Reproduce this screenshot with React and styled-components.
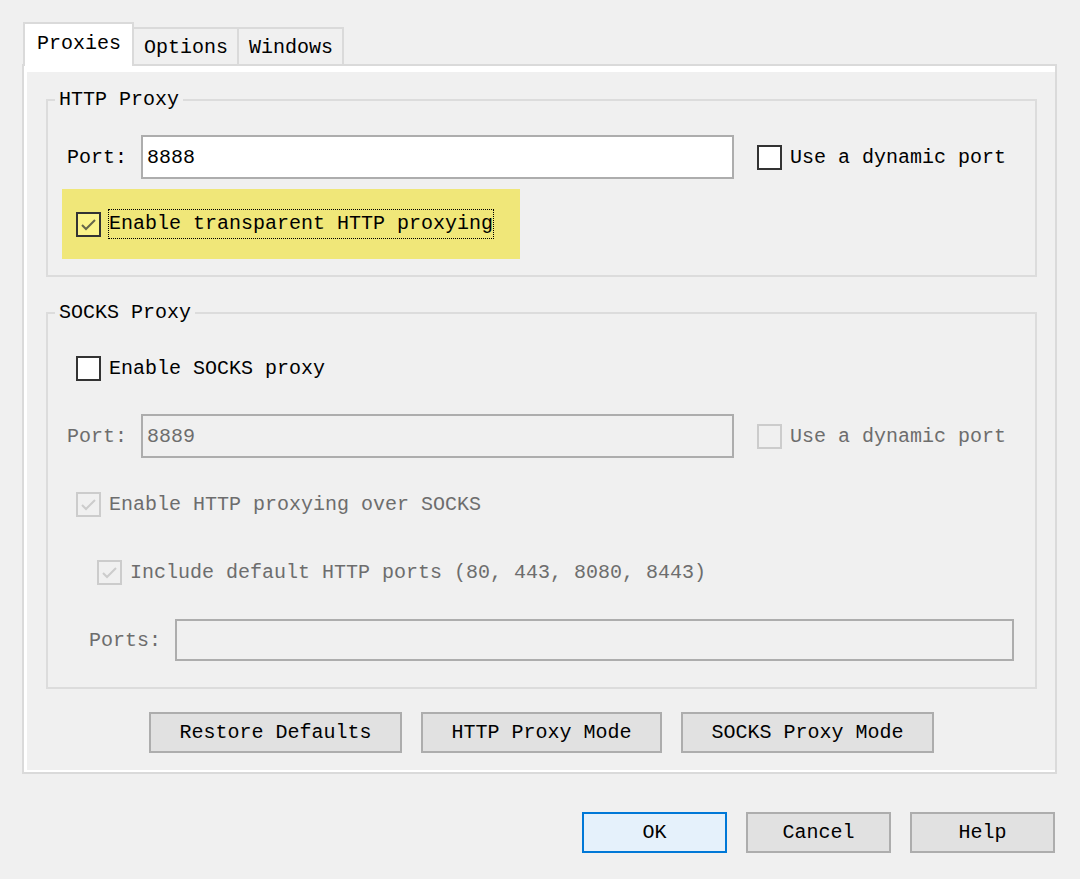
import React from "react";
import styled, { createGlobalStyle, css } from "styled-components";

const GlobalStyle = createGlobalStyle`
  html, body {
    margin: 0;
    background: #f0f0f0;
  }
  body {
    font-family: "Liberation Mono", "DejaVu Sans Mono", monospace;
    font-size: 20px;
    color: #000;
  }
`;

const Window = styled.div`
  width: 1080px;
  height: 879px;
  box-sizing: border-box;
  padding: 22px 23px 0 22px;
  display: flex;
  flex-direction: column;
`;

const TabStrip = styled.div`
  display: flex;
  align-items: flex-end;
  height: 42px;
  padding-left: 1px;
`;

const Tab = styled.div`
  box-sizing: border-box;
  border: 2px solid #dadada;
  border-bottom: none;
  line-height: 22px;
  ${(p) =>
    p.$active
      ? css`
          position: relative;
          z-index: 1;
          height: 44px;
          margin-bottom: -2px;
          padding: 9px 11px 0 12px;
          background: #fff;
        `
      : css`
          height: 37px;
          margin-left: -2px;
          padding: 8px 9px 0 10px;
          background: #f0f0f0;
        `}
`;

const Panel = styled.div`
  box-sizing: border-box;
  border: 2px solid #dadada;
  box-shadow: inset 3px 6px 0 #fff, inset 0 -2px 0 #fff;
  padding: 23px 18px 19px 22px;
  display: flex;
  flex-direction: column;
`;

const Group = styled.fieldset`
  margin: ${(p) => (p.$spaced ? "25px 0 0" : "0")};
  padding: 0;
  min-inline-size: 0;
  border: 2px solid #dcdcdc;
`;

const Legend = styled.legend`
  margin-left: 7px;
  padding: 0 4px;
  line-height: 22px;
`;

const GroupBody = styled.div`
  display: flex;
  flex-direction: column;
  gap: ${(p) => p.$gap || 0}px;
  padding: ${(p) => p.$pad};
`;

const Row = styled.div`
  display: flex;
  align-items: center;
  height: ${(p) => p.$height || 44}px;
  margin-left: ${(p) => p.$indent || 0}px;
`;

const Label = styled.span`
  color: ${(p) => (p.$disabled ? "#6d6d6d" : "#000")};
  margin-right: 14px;
  white-space: pre;
`;

const TextInput = styled.div`
  box-sizing: border-box;
  width: ${(p) => p.$width}px;
  height: ${(p) => p.$height || 44}px;
  border: 2px solid #adadad;
  background: ${(p) => (p.$disabled ? "#f0f0f0" : "#fff")};
  color: ${(p) => (p.$disabled ? "#6d6d6d" : "#000")};
  padding-left: 4px;
  display: flex;
  align-items: center;
`;

const CheckRow = styled.label`
  display: inline-flex;
  align-items: center;
  gap: 8px;
  margin-left: ${(p) => p.$gapLeft || 0}px;
  color: ${(p) => (p.$disabled ? "#6d6d6d" : "#000")};
  white-space: pre;
`;

const Box = styled.span`
  box-sizing: border-box;
  width: 25px;
  height: 25px;
  border: 2px solid ${(p) => (p.$disabled ? "#cccccc" : "#333")};
  background: ${(p) =>
    p.$tone === "yellow" ? "#fbf38a" : p.$disabled ? "#f0f0f0" : "#fff"};
  display: flex;
  align-items: center;
  justify-content: center;
  flex: none;
`;

const Highlight = styled.div`
  align-self: flex-start;
  margin: 10px 0 0 -5px;
  height: 70px;
  padding: 0 27px 0 14px;
  background: #f0e779;
  display: flex;
  align-items: center;
`;

const FocusText = styled.span`
  outline: 1px dotted #000;
  line-height: 28px;
`;

const ButtonRow = styled.div`
  display: flex;
  justify-content: ${(p) => p.$align || "center"};
  gap: 19px;
  margin-top: ${(p) => p.$top}px;
  padding-right: ${(p) => p.$right || 0}px;
`;

const Button = styled.div`
  box-sizing: border-box;
  width: ${(p) => p.$width}px;
  height: 41px;
  border: 2px solid ${(p) => (p.$default ? "#0078d7" : "#adadad")};
  background: ${(p) => (p.$default ? "#e5f1fb" : "#e1e1e1")};
  display: flex;
  align-items: center;
  justify-content: center;
  white-space: pre;
`;

const Checkbox = ({ checked, disabled, tone, children, gapLeft, focus }) => (
  <CheckRow $disabled={disabled} $gapLeft={gapLeft}>
    <Box $disabled={disabled} $tone={tone}>
      {checked && (
        <svg width="21" height="21" viewBox="0 0 21 21">
          <path
            d="M4 11 L8 15 L17 6"
            fill="none"
            stroke={disabled ? "#cccccc" : "#66664a"}
            strokeWidth="2"
          />
        </svg>
      )}
    </Box>
    {focus ? <FocusText>{children}</FocusText> : children}
  </CheckRow>
);

export default function App() {
  return (
    <Window>
      <GlobalStyle />
      <TabStrip>
        <Tab $active>Proxies</Tab>
        <Tab>Options</Tab>
        <Tab>Windows</Tab>
      </TabStrip>
      <Panel>
        <Group>
          <Legend>HTTP Proxy</Legend>
          <GroupBody $pad="24px 0 16px 19px">
            <Row>
              <Label>Port:</Label>
              <TextInput $width={593}>8888</TextInput>
              <Checkbox gapLeft={23}>Use a dynamic port</Checkbox>
            </Row>
            <Highlight>
              <Checkbox checked tone="yellow" focus>
                Enable transparent HTTP proxying
              </Checkbox>
            </Highlight>
          </GroupBody>
        </Group>
        <Group $spaced>
          <Legend>SOCKS Proxy</Legend>
          <GroupBody $pad="22px 20px 25px 19px" $gap={24}>
            <Row $indent={9}>
              <Checkbox>Enable SOCKS proxy</Checkbox>
            </Row>
            <Row>
              <Label $disabled>Port:</Label>
              <TextInput $width={593} $disabled>
                8889
              </TextInput>
              <Checkbox gapLeft={23} disabled>
                Use a dynamic port
              </Checkbox>
            </Row>
            <Row $indent={9}>
              <Checkbox checked disabled>
                Enable HTTP proxying over SOCKS
              </Checkbox>
            </Row>
            <Row $indent={30}>
              <Checkbox checked disabled>
                Include default HTTP ports (80, 443, 8080, 8443)
              </Checkbox>
            </Row>
            <Row $indent={22}>
              <Label $disabled>Ports:</Label>
              <TextInput $width={839} $height={42} $disabled />
            </Row>
          </GroupBody>
        </Group>
        <ButtonRow $top={23}>
          <Button $width={253}>Restore Defaults</Button>
          <Button $width={241}>HTTP Proxy Mode</Button>
          <Button $width={253}>SOCKS Proxy Mode</Button>
        </ButtonRow>
      </Panel>
      <ButtonRow $top={38} $align="flex-end" $right={2}>
        <Button $width={145} $default>
          OK
        </Button>
        <Button $width={145}>Cancel</Button>
        <Button $width={145}>Help</Button>
      </ButtonRow>
    </Window>
  );
}
